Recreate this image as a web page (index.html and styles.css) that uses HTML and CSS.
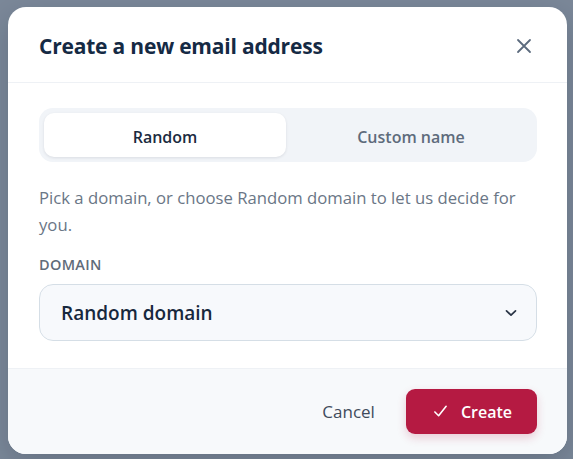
FILE: index.html
```html
<!DOCTYPE html>
<html lang="en">
<head>
<meta charset="utf-8">
<title>Create a new email address</title>
<link rel="stylesheet" href="styles.css">
</head>
<body>
<div class="backdrop">
  <div class="modal" role="dialog" aria-labelledby="dlg-title">
    <header class="modal-header">
      <h1 id="dlg-title" class="modal-title">Create a new email address</h1>
      <button class="close-btn" aria-label="Close">
        <svg width="16" height="16" viewBox="0 0 16 16" fill="none" stroke="currentColor" stroke-width="1.8" stroke-linecap="round"><path d="M2 2L14 14M14 2L2 14"/></svg>
      </button>
    </header>
    <div class="modal-body">
      <div class="segmented">
        <button class="seg-item active">Random</button>
        <button class="seg-item">Custom name</button>
      </div>
      <p class="hint">Pick a domain, or choose Random domain to let us decide for you.</p>
      <label class="field-label">Domain</label>
      <div class="select">
        <span class="select-value">Random domain</span>
        <svg class="chevron" width="12" height="8" viewBox="0 0 12 8" fill="none" stroke="currentColor" stroke-width="1.7" stroke-linecap="round" stroke-linejoin="round"><path d="M1.5 1.8L6 6.2L10.5 1.8"/></svg>
      </div>
    </div>
    <footer class="modal-footer">
      <button class="btn-cancel">Cancel</button>
      <button class="btn-create">
        <svg width="15" height="15" viewBox="0 0 16 16" fill="none" stroke="currentColor" stroke-width="1.7" stroke-linecap="round" stroke-linejoin="round"><path d="M2 8.5L6 12.5L14 2.5"/></svg>
        Create
      </button>
    </footer>
  </div>
</div>
</body>
</html>
```
FILE: styles.css
```css
* { box-sizing: border-box; }
html, body { margin: 0; padding: 0; }
body {
  background: #7b8899;
  font-family: "Open Sans", "Noto Sans", sans-serif;
  width: 573px;
  height: 459px;
  overflow: hidden;
}
.backdrop {
  padding: 7px 6px 5px 8px;
}
.modal {
  background: #ffffff;
  border-radius: 18px;
  overflow: hidden;
  height: 447px;
  display: flex;
  flex-direction: column;
  box-shadow: 0 10px 30px rgba(15, 23, 42, 0.2);
}
.modal-header {
  display: flex;
  align-items: center;
  justify-content: space-between;
  height: 76px;
  padding: 2px 35px 0 31px;
  border-bottom: 1px solid #eef1f5;
}
.modal-title {
  margin: 0;
  font-size: 21px;
  font-weight: 700;
  color: #152a44;
  letter-spacing: -0.2px;
}
.close-btn {
  border: none;
  background: transparent;
  color: #5c6b7e;
  padding: 0;
  width: 16px;
  height: 16px;
  display: flex;
}
.modal-body {
  flex: 1;
  padding: 25px 30px 0 31px;
}
.segmented {
  display: flex;
  background: #f1f4f8;
  border-radius: 14px;
  padding: 5px;
  height: 54px;
  gap: 4px;
}
.seg-item {
  flex: 1;
  border: none;
  background: transparent;
  border-radius: 10px;
  padding: 3px 0 0;
  font-family: inherit;
  font-size: 16px;
  font-weight: 600;
  color: #5e6b7c;
}
.seg-item.active {
  background: #ffffff;
  color: #1b2b40;
  box-shadow: 0 1px 3px rgba(15, 23, 42, 0.1);
}
.hint {
  margin: 22px 0 0;
  font-size: 16.7px;
  line-height: 27px;
  color: #6a7686;
}
.field-label {
  display: block;
  margin-top: 17px;
  font-size: 14.5px;
  line-height: 19px;
  font-weight: 600;
  color: #5f6b7a;
  text-transform: uppercase;
  letter-spacing: 0.3px;
}
.select {
  margin-top: 10px;
  height: 57px;
  display: flex;
  align-items: center;
  justify-content: space-between;
  padding: 0 19px 0 21px;
  background: #f7f9fc;
  border: 1.5px solid #d5dee6;
  border-radius: 14px;
}
.select-value {
  font-size: 19px;
  font-weight: 600;
  color: #17283d;
}
.chevron { color: #2a3546; }
.modal-footer {
  height: 86px;
  background: #f7f9fb;
  border-top: 1px solid #eef1f5;
  display: flex;
  align-items: center;
  justify-content: flex-end;
  gap: 31px;
  padding: 0 30px 0 0;
}
.btn-cancel {
  border: none;
  background: transparent;
  font-family: inherit;
  font-size: 17px;
  font-weight: 500;
  color: #3f4b5b;
  padding: 0;
}
.btn-create {
  display: flex;
  align-items: center;
  gap: 13px;
  height: 45px;
  padding: 0 25px 0 27px;
  border: none;
  border-radius: 9px;
  background: #b51a42;
  color: #ffffff;
  font-family: inherit;
  font-size: 16px;
  font-weight: 600;
  box-shadow: 0 4px 10px rgba(181, 26, 66, 0.2);
}
```
